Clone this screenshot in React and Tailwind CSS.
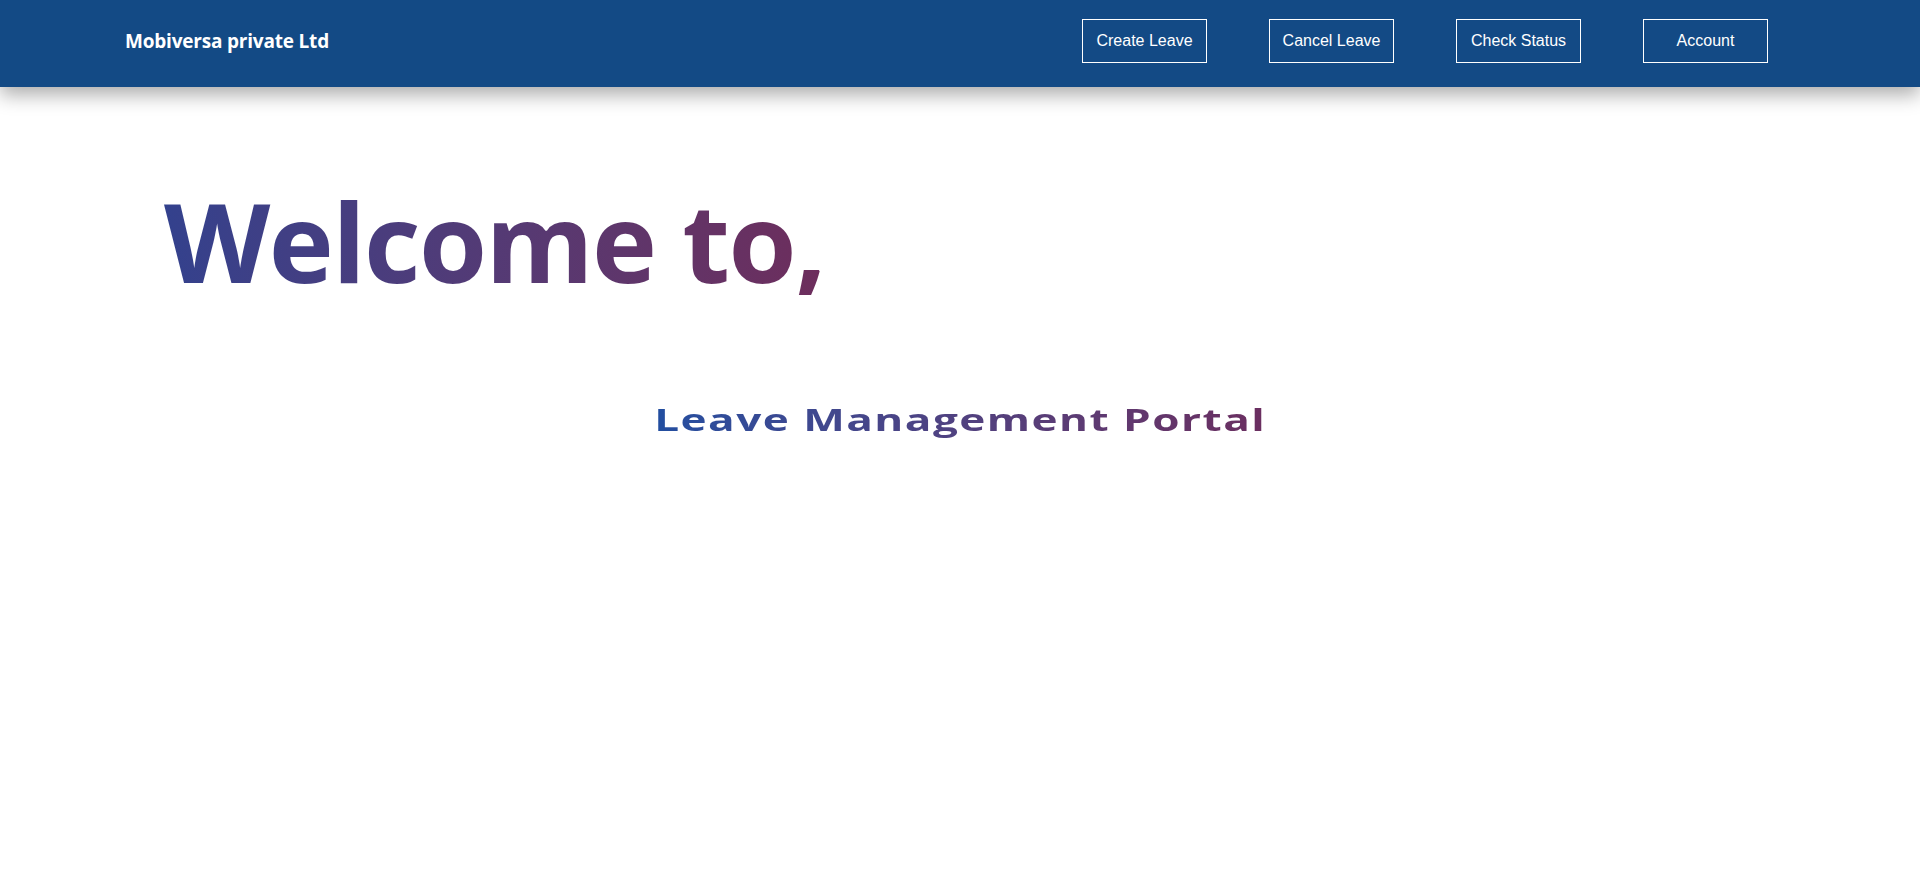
import React from 'react';

const navItems = ['Create Leave', 'Cancel Leave', 'Check Status', 'Account'];

function Header() {
  return (
    <header className="h-[87px] bg-[#134a85] flex items-center justify-between pl-[125px] pr-[152px] pb-[5px] shadow-[0_8px_18px_rgba(0,0,0,0.32)] relative z-10">
      <span className="text-white text-[19px] font-bold font-['Open_Sans',sans-serif] tracking-[-0.2px]">
        Mobiversa private Ltd
      </span>
      <nav className="flex items-center gap-[62px]">
        {navItems.map((item) => (
          <button
            key={item}
            className="w-[125px] h-[44px] border border-white text-white text-[16px] font-['Liberation_Sans',Arial,sans-serif] flex items-center justify-center"
          >
            {item}
          </button>
        ))}
      </nav>
    </header>
  );
}

export default function App() {
  return (
    <div className="min-h-[888px] bg-white">
      <Header />
      <main className="flex flex-col">
        <div className="pl-[164px] pt-[98px]">
          <h1 className="inline-block text-[110px] leading-none font-bold font-['Open_Sans',sans-serif] tracking-[-1.6px] bg-gradient-to-r from-[#33418d] to-[#6d2d5c] bg-clip-text text-transparent">
            Welcome to,
          </h1>
        </div>
        <div className="flex justify-center pt-[102px]">
          <h2 className="inline-block text-[30px] leading-normal font-bold font-['Open_Sans',sans-serif] tracking-[1px] scale-x-[1.47] bg-gradient-to-r from-[#214ea0] to-[#6b2e60] bg-clip-text text-transparent">
            Leave Management Portal
          </h2>
        </div>
      </main>
    </div>
  );
}
